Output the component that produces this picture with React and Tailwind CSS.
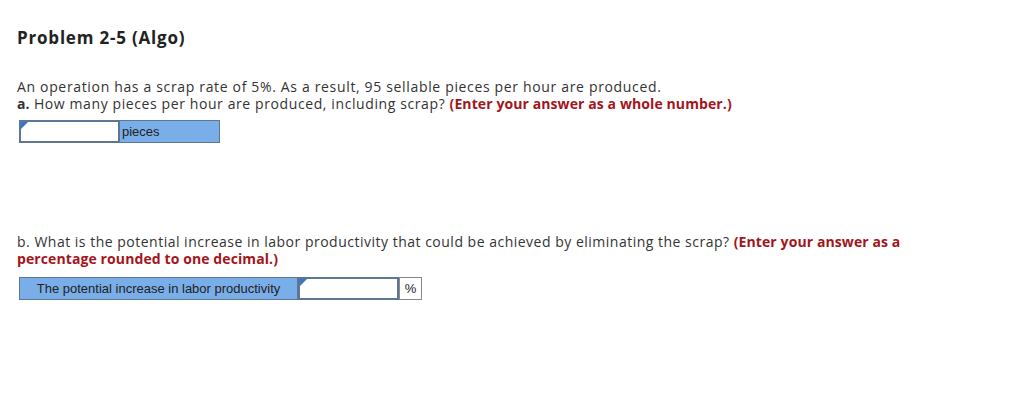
import React from "react";

const Corner = () => (
  <span className="absolute left-0 top-0 w-0 h-0 border-t-[7px] border-r-[7px] border-t-[#3b74c4] border-r-transparent" />
);

const AnswerInput = ({ className = "" }) => (
  <div className={`relative bg-white border-2 border-[#5d7694] ${className}`}>
    <Corner />
  </div>
);

const Hint = ({ children }) => (
  <span className="font-bold text-[#a3151c] tracking-[0.1px]">{children}</span>
);

export default function App() {
  return (
    <div className="w-[1010px] h-[420px] bg-white pl-[17px] pt-[27px] text-[#333] font-['Open_Sans',sans-serif]">
      <h2 className="text-[17px] font-bold text-[#222] leading-[22px] tracking-[0.8px]">Problem 2-5 (Algo)</h2>

      <div className="mt-[29px] text-[14px] leading-[17px] tracking-[0.6px]">
        <p className="tracking-[0.66px]">An operation has a scrap rate of 5%. As a result, 95 sellable pieces per hour are produced.</p>
        <p>
          <span className="font-bold tracking-[0.1px]">a.</span> How many pieces per hour are produced, including scrap?{" "}
          <Hint>(Enter your answer as a whole number.)</Hint>
        </p>
      </div>

      <div className="mt-[8px] ml-[2px] flex h-[23px] w-[201px] border border-[#5d7694] font-['Liberation_Sans',sans-serif] text-[13px]">
        <AnswerInput className="w-[101px] h-[23px] -m-px" />
        <div className="flex-1 bg-[#7aaee8] flex items-center pl-[3px] text-[#222]">pieces</div>
      </div>

      <div className="mt-[90px] text-[14px] leading-[17px] tracking-[0.5px] w-[900px]">
        <p>
          b. What is the potential increase in labor productivity that could be achieved by eliminating the scrap?{" "}
          <Hint>(Enter your answer as a percentage rounded to one decimal.)</Hint>
        </p>
      </div>

      <div className="mt-[10px] ml-[2px] flex h-[23px] font-['Liberation_Sans',sans-serif] text-[13px]">
        <div className="w-[279px] bg-[#7aaee8] border border-[#5d7694] flex items-center justify-center text-[#222]">
          The potential increase in labor productivity
        </div>
        <AnswerInput className="w-[101px] h-full" />
        <div className="w-[23px] border border-[#888] flex items-center justify-center text-[#222]">%</div>
      </div>
    </div>
  );
}
